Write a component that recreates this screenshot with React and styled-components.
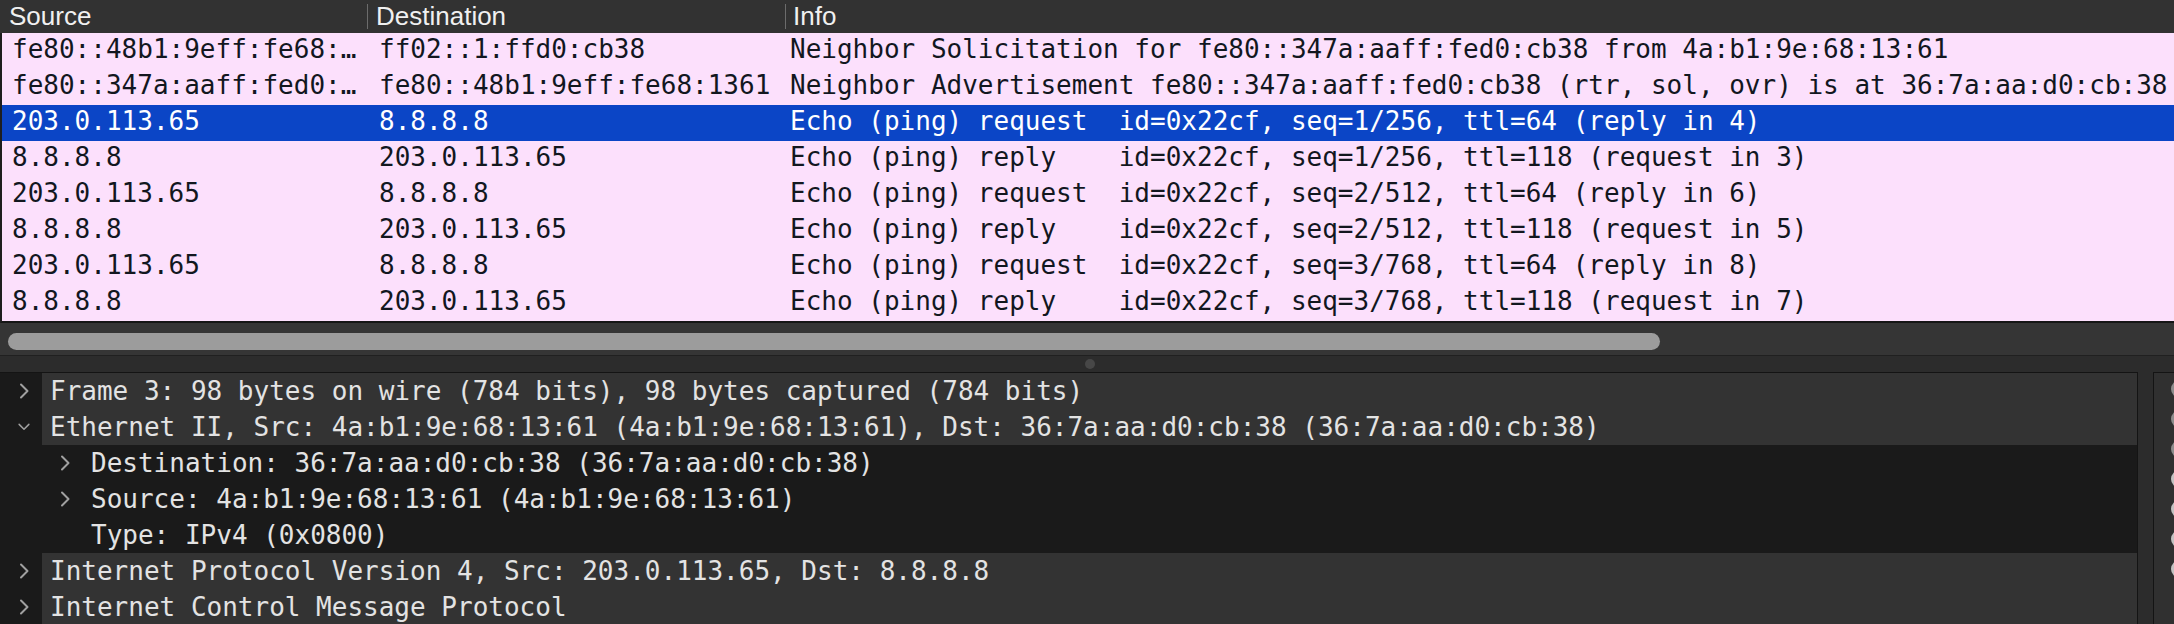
import React from 'react';
import styled, { createGlobalStyle } from 'styled-components';

const Global = createGlobalStyle`
  html, body { margin: 0; padding: 0; background: #2c2c2c; overflow: hidden; }
  #root { width: 2174px; height: 624px; }
`;

const MONO = `"DejaVu Sans Mono", "Liberation Mono", monospace`;
const SANS = `"Liberation Sans", Arial, sans-serif`;

const Window = styled.div`
  width: 2174px;
  height: 624px;
  display: flex;
  flex-direction: column;
  overflow: hidden;
  background: #2c2c2c;
`;

const PacketList = styled.div`
  display: flex;
  flex-direction: column;
  flex: none;
`;

const Header = styled.div`
  display: flex;
  align-items: center;
  height: 33px;
  background: #323232;
`;

const HeaderCell = styled.div`
  width: ${(p) => (p.$w ? `${p.$w}px` : 'auto')};
  flex: ${(p) => (p.$w ? 'none' : '1')};
  padding-left: ${(p) => p.$pad}px;
  box-sizing: border-box;
  font-family: ${SANS};
  font-size: 26px;
  line-height: 33px;
  color: #f0f0f0;
  white-space: nowrap;
`;

const HeaderDivider = styled.div`
  width: 1px;
  height: 25px;
  background: #6c6c6c;
  flex: none;
`;

const Rows = styled.div`
  border-left: 2px solid #1e1e1e;
  border-bottom: 2px solid #161616;
`;

const Row = styled.div`
  display: grid;
  grid-template-columns: 365px 418px 1fr;
  height: 36px;
  background: ${(p) => (p.$selected ? '#0b45c6' : '#fce0fc')};
  color: ${(p) => (p.$selected ? '#ffffff' : '#12171f')};
  font-family: ${MONO};
  font-size: 26px;
  line-height: 32px;
`;

const Cell = styled.div`
  padding-left: ${(p) => p.$pad}px;
  white-space: pre;
  overflow: hidden;
`;

const HScroll = styled.div`
  height: 32px;
  background: #353535;
  padding: 10px 0 0 8px;
  box-sizing: border-box;
  flex: none;
`;

const Thumb = styled.div`
  width: 1652px;
  height: 17px;
  border-radius: 9px;
  background: #9c9c9c;
`;

const Splitter = styled.div`
  height: 16px;
  flex: none;
  border-top: 1px solid #202020;
  background: #2c2c2c;
  display: flex;
  align-items: center;
  justify-content: center;
`;

const SplitDot = styled.div`
  width: 10px;
  height: 10px;
  border-radius: 50%;
  background: #474747;
  margin-left: 6px;
`;

const Lower = styled.div`
  flex: 1;
  display: flex;
  min-height: 0;
`;

const Tree = styled.div`
  flex: 1;
  border-top: 1px solid #141414;
  border-right: 1px solid #141414;
  background: #1a1a1a;
  overflow: hidden;
`;

const TreeRow = styled.div`
  display: flex;
  height: 36px;
  font-family: ${MONO};
  font-size: 26px;
  line-height: 36px;
  color: #e3e3e3;
`;

const Gutter = styled.div`
  flex: none;
  width: ${(p) => 42 + 41 * p.$level}px;
  padding-left: ${(p) => 18 + 41 * p.$level}px;
  box-sizing: border-box;
  display: flex;
  align-items: center;
  background: #1a1a1a;
`;

const ArrowBox = styled.div`
  width: 12px;
  height: 36px;
  display: flex;
  align-items: center;
  justify-content: center;
`;

const TreeText = styled.div`
  flex: 1;
  padding-left: 8px;
  background: ${(p) => (p.$level === 0 ? '#333333' : '#1a1a1a')};
  white-space: pre;
  overflow: hidden;
`;

const Gap = styled.div`
  width: 15px;
  flex: none;
  background: #2c2c2c;
`;

const BytesPane = styled.div`
  width: 21px;
  flex: none;
  border-top: 1px solid #141414;
  border-left: 1px solid #141414;
  background: #303030;
  overflow: hidden;
  display: flex;
  flex-direction: column;
  gap: 12px;
  padding: 7px 0 0 17px;
  box-sizing: border-box;
`;

const Dot = styled.div`
  width: 18px;
  height: 18px;
  border-radius: 50%;
  flex: none;
  background: ${(p) => (p.$light ? '#c2c2c2' : '#8d8d8d')};
`;

const Chevron = ({ dir }) =>
  dir === 'down' ? (
    <svg width="16" height="10" viewBox="0 0 16 10">
      <polyline points="1.5,1.5 8,8 14.5,1.5" fill="none" stroke="#a0a0a0" strokeWidth="2" strokeLinecap="round" strokeLinejoin="round" />
    </svg>
  ) : (
    <svg width="10" height="16" viewBox="0 0 10 16">
      <polyline points="2,1.5 8.5,8 2,14.5" fill="none" stroke="#a0a0a0" strokeWidth="2" strokeLinecap="round" strokeLinejoin="round" />
    </svg>
  );

const packets = [
  ['fe80::48b1:9eff:fe68:…', 'ff02::1:ffd0:cb38', 'Neighbor Solicitation for fe80::347a:aaff:fed0:cb38 from 4a:b1:9e:68:13:61'],
  ['fe80::347a:aaff:fed0:…', 'fe80::48b1:9eff:fe68:1361', 'Neighbor Advertisement fe80::347a:aaff:fed0:cb38 (rtr, sol, ovr) is at 36:7a:aa:d0:cb:38'],
  ['203.0.113.65', '8.8.8.8', 'Echo (ping) request  id=0x22cf, seq=1/256, ttl=64 (reply in 4)', true],
  ['8.8.8.8', '203.0.113.65', 'Echo (ping) reply    id=0x22cf, seq=1/256, ttl=118 (request in 3)'],
  ['203.0.113.65', '8.8.8.8', 'Echo (ping) request  id=0x22cf, seq=2/512, ttl=64 (reply in 6)'],
  ['8.8.8.8', '203.0.113.65', 'Echo (ping) reply    id=0x22cf, seq=2/512, ttl=118 (request in 5)'],
  ['203.0.113.65', '8.8.8.8', 'Echo (ping) request  id=0x22cf, seq=3/768, ttl=64 (reply in 8)'],
  ['8.8.8.8', '203.0.113.65', 'Echo (ping) reply    id=0x22cf, seq=3/768, ttl=118 (request in 7)'],
];

const tree = [
  { level: 0, arrow: 'right', text: 'Frame 3: 98 bytes on wire (784 bits), 98 bytes captured (784 bits)' },
  { level: 0, arrow: 'down', text: 'Ethernet II, Src: 4a:b1:9e:68:13:61 (4a:b1:9e:68:13:61), Dst: 36:7a:aa:d0:cb:38 (36:7a:aa:d0:cb:38)' },
  { level: 1, arrow: 'right', text: 'Destination: 36:7a:aa:d0:cb:38 (36:7a:aa:d0:cb:38)' },
  { level: 1, arrow: 'right', text: 'Source: 4a:b1:9e:68:13:61 (4a:b1:9e:68:13:61)' },
  { level: 1, arrow: null, text: 'Type: IPv4 (0x0800)' },
  { level: 0, arrow: 'right', text: 'Internet Protocol Version 4, Src: 203.0.113.65, Dst: 8.8.8.8' },
  { level: 0, arrow: 'right', text: 'Internet Control Message Protocol' },
];

export default function App() {
  return (
    <Window>
      <Global />
      <PacketList>
        <Header>
          <HeaderCell $w={367} $pad={9}>Source</HeaderCell>
          <HeaderDivider />
          <HeaderCell $w={417} $pad={8}>Destination</HeaderCell>
          <HeaderDivider />
          <HeaderCell $pad={7}>Info</HeaderCell>
        </Header>
        <Rows>
          {packets.map(([src, dst, info, sel], i) => (
            <Row key={i} $selected={sel}>
              <Cell $pad={10}>{src}</Cell>
              <Cell $pad={12}>{dst}</Cell>
              <Cell $pad={5}>{info}</Cell>
            </Row>
          ))}
        </Rows>
      </PacketList>
      <HScroll>
        <Thumb />
      </HScroll>
      <Splitter>
        <SplitDot />
      </Splitter>
      <Lower>
        <Tree>
          {tree.map((n, i) => (
            <TreeRow key={i}>
              <Gutter $level={n.level}>
                <ArrowBox>{n.arrow && <Chevron dir={n.arrow} />}</ArrowBox>
              </Gutter>
              <TreeText $level={n.level}>{n.text}</TreeText>
            </TreeRow>
          ))}
        </Tree>
        <Gap />
        <BytesPane>
          {[0, 1, 2, 3, 4, 5, 6].map((i) => (
            <Dot key={i} $light={i >= 3} />
          ))}
        </BytesPane>
      </Lower>
    </Window>
  );
}
